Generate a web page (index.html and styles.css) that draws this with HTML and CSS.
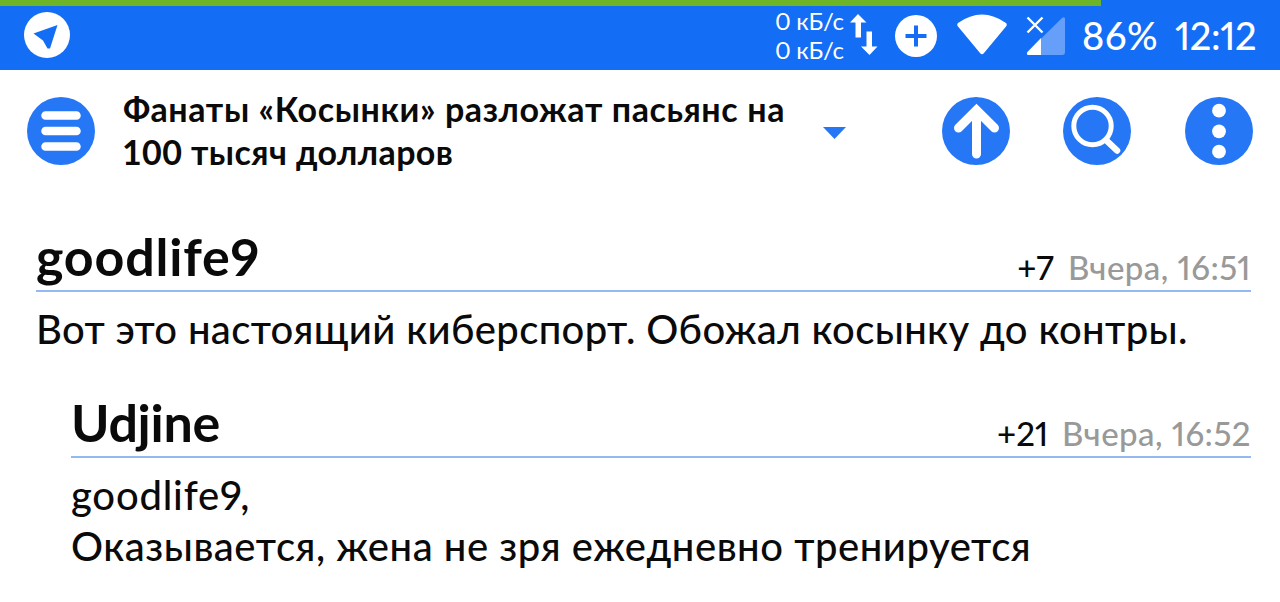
FILE: index.html
```
<!DOCTYPE html>
<html lang="ru">
<head>
  <meta charset="utf-8">
  <title>Фанаты «Косынки» разложат пасьянс на 100 тысяч долларов</title>
  <meta name="viewport" content="width=device-width, initial-scale=1">
  <link rel="stylesheet" href="styles.css">
</head>
<body>
  <div class="progress"><div class="progress-bar"></div></div>

  <div class="status">
    <svg class="telegram" width="46" height="46" viewBox="0 0 46 46">
      <circle cx="23" cy="23" r="23" fill="#fff"/>
      <path d="M9.500 21.500 33.500 13 26 36.500H23.500L19 28.500Z" fill="#146df5"/>
    </svg>
    <div class="speed">
      <span>0 кБ/с</span>
      <span>0 кБ/с</span>
    </div>
    <svg class="traffic" width="28" height="42" viewBox="0 0 28 42" fill="#fff">
      <path d="M8 0 16.500 8.500H11V23.500H5.500V8.500H0Z"/>
      <path d="M16.500 17.500H22V32.500H27.500L19.500 41 11 32.500H16.500Z"/>
    </svg>
    <svg class="plus" width="42" height="42" viewBox="0 0 42 42">
      <circle cx="21" cy="21" r="21" fill="#fff"/>
      <path d="M21 10.500V31.500M10.500 21H31.500" stroke="#146df5" stroke-width="4"/>
    </svg>
    <svg class="wifi" width="50" height="41" viewBox="0 0 50 41">
      <path d="M1 9Q25-8 49 9 50.500 10.500 49 12.500L27 39Q25 41.500 23 39L1 12.500Q-.5 10.500 1 9Z" fill="#fff"/>
    </svg>
    <svg class="signal" width="40" height="40" viewBox="0 0 40 40">
      <path d="M2 39Q0 38 1.500 36L36 2Q39 0 39 3V36Q39 39 36 39Z" fill="#659ff9"/>
      <path d="M15 22V39H2Q0 38 1.500 36Z" fill="#fff"/>
      <path d="M1.500 1.500 16.500 16.500M16.500 1.500 1.500 16.500" stroke="#fff" stroke-width="2.400"/>
    </svg>
    <span class="battery">86%</span>
    <span class="clock">12:12</span>
  </div>

  <div class="toolbar">
    <svg class="round menu" width="68" height="68" viewBox="0 0 68 68">
      <circle cx="34" cy="34" r="34" fill="#2577f6"/>
      <path d="M18.500 18.500H49.500M18.500 34H49.500M18.500 49.500H49.500" stroke="#fff" stroke-width="8.500" stroke-linecap="round"/>
    </svg>
    <h1><span class="line1">Фанаты «Косынки» разложат пасьянс на</span> <span class="line2">100 тысяч долларов</span></h1>
    <svg class="caret" width="23" height="12" viewBox="0 0 23 12">
      <path d="M0 0H23L11.500 12Z" fill="#2577f6"/>
    </svg>
    <div class="actions">
      <svg class="round" width="68" height="68" viewBox="0 0 68 68">
        <circle cx="34" cy="34" r="34" fill="#2577f6"/>
        <path d="M34.500 57V14M16.500 31 34.500 13 52.500 31" fill="none" stroke="#fff" stroke-width="9" stroke-linecap="round"/>
      </svg>
      <svg class="round search" width="68" height="68" viewBox="0 0 68 68">
        <circle cx="34" cy="34" r="34" fill="#2577f6"/>
        <circle cx="29.500" cy="29" r="18.700" fill="none" stroke="#fff" stroke-width="5"/>
        <path d="M42 42 46 46" stroke="#fff" stroke-width="5"/>
        <path d="M45 45 54 53.500" stroke="#fff" stroke-width="6.500" stroke-linecap="round"/>
      </svg>
      <svg class="round" width="68" height="68" viewBox="0 0 68 68">
        <circle cx="34" cy="34" r="34" fill="#2577f6"/>
        <g fill="#fff">
          <circle cx="34" cy="13.700" r="6.900"/>
          <circle cx="34" cy="34.300" r="6.900"/>
          <circle cx="34" cy="54.700" r="6.900"/>
        </g>
      </svg>
    </div>
  </div>

  <div class="comment">
    <div class="head">
      <h2 class="name1">goodlife9</h2>
      <span class="rating">+7</span>
      <span class="date">Вчера, 16:51</span>
    </div>
    <p class="text1">Вот это настоящий киберспорт. Обожал косынку до контры.</p>
  </div>

  <div class="comment reply">
    <div class="head">
      <h2 class="name2">Udjine</h2>
      <span class="rating">+21</span>
      <span class="date">Вчера, 16:52</span>
    </div>
    <p class="text2">goodlife9,</p>
    <p class="text3">Оказывается, жена не зря ежедневно тренируется</p>
  </div>
</body>
</html>
```
FILE: styles.css
```
* {
  box-sizing: border-box;
  margin: 0;
  padding: 0;
}

body {
  height: 602px;
  overflow: hidden;
  background: #fff;
  color: #0a0a0a;
  font-family: Lato, "Open Sans", sans-serif;
  font-weight: 500;
  font-variant-numeric: proportional-nums;
  white-space: nowrap;
}

svg {
  display: block;
  flex: none;
}

.progress {
  height: 6px;
  background: #146df5;
}

.progress-bar {
  width: 1101px;
  height: 6px;
  background: #6db426;
}

.status {
  display: flex;
  align-items: flex-start;
  height: 64px;
  padding-left: 24px;
  background: #146df5;
  color: #fff;
}

.telegram {
  margin-top: 6px;
}

.speed {
  width: 75px;
  margin-left: 705px;
  font-size: 24px;
  font-weight: 400;
  line-height: 29px;
  letter-spacing: -0.3px;
}

.speed span {
  display: block;
}

.traffic {
  margin-top: 8px;
}

.plus {
  margin: 9px 0 0 17px;
}

.wifi {
  margin: 8px 0 0 20px;
}

.signal {
  margin: 10px 0 0 19px;
}

.battery,
.clock {
  font-size: 38px;
  font-weight: 500;
  line-height: 58px;
}

.battery {
  width: 93px;
  margin-left: 16px;
  letter-spacing: 0.6px;
}

.clock {
  letter-spacing: -0.4px;
}

.toolbar {
  display: flex;
  align-items: center;
  height: 122px;
  padding: 0 27px;
}

h1 {
  width: 700px;
  margin: -3px 0 0 28px;
  font-size: 34px;
  font-weight: 700;
  font-variant-numeric: normal;
  line-height: 43px;
}

h1 span {
  display: block;
}

.line1 {
  letter-spacing: 0.6px;
}

.line2 {
  margin-left: -1px;
  letter-spacing: 0.4px;
}

.caret {
  margin-top: 4px;
}

.actions {
  display: flex;
  gap: 53.5px;
  margin-left: auto;
}

.search {
  margin: 0 0.5px 0 -0.5px;
}

.comment {
  margin: 35px 29px 0 36px;
}

.reply {
  margin: 38px 29px 0 71px;
}

.head {
  display: flex;
  align-items: flex-start;
  height: 65px;
  border-bottom: 2px solid #93b8f3;
  line-height: 60px;
}

h2 {
  margin-right: auto;
  font-size: 52px;
  font-weight: 700;
  line-height: 59px;
}

.name1 {
  letter-spacing: 0.8px;
}

.name2 {
  letter-spacing: -0.3px;
}

.rating,
.date {
  padding-top: 10px;
  font-size: 33px;
}

.date {
  margin-left: 14px;
  color: #999;
  letter-spacing: 0.45px;
}

p {
  font-size: 40px;
  line-height: 51px;
}

.text1 {
  letter-spacing: 0.36px;
}

.text2 {
  letter-spacing: 0.8px;
}

.text3 {
  letter-spacing: 0.54px;
}

.head + p {
  margin-top: 12px;
}
```
